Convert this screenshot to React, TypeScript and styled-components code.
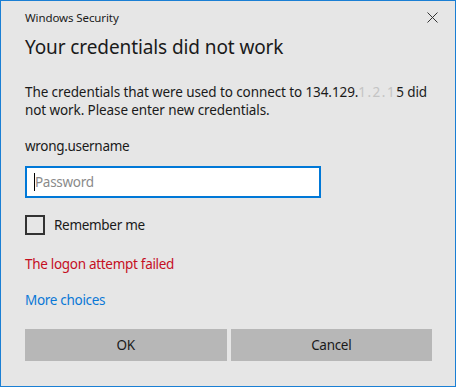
import React from "react";
import styled, { createGlobalStyle } from "styled-components";

const GlobalStyle = createGlobalStyle`
  html, body {
    margin: 0;
    padding: 0;
    background: #e6e6e6;
  }
  * {
    box-sizing: border-box;
  }
`;

const Window = styled.div`
  width: 456px;
  height: 387px;
  border: 1px solid #1a7fd4;
  background: #e6e6e6;
  font-family: "Noto Sans", "Open Sans", sans-serif;
  color: #1a1a1a;
  display: flex;
  flex-direction: column;
`;

const TitleBar = styled.div`
  height: 32px;
  display: flex;
  align-items: center;
  justify-content: space-between;
  padding: 0 13px 0 24px;
`;

const Caption = styled.span`
  font-size: 11.5px;
  letter-spacing: -0.1px;
  color: #1a1a1a;
`;

const CloseButton = styled.button`
  width: 20px;
  height: 20px;
  border: none;
  background: transparent;
  padding: 0;
  display: flex;
  align-items: center;
  justify-content: center;
`;

const Body = styled.div`
  padding: 0 23px 0 24px;
  display: flex;
  flex-direction: column;
  font-size: 13.5px;
  letter-spacing: -0.3px;
`;

const Heading = styled.h1`
  margin: 0;
  font-size: 19px;
  font-weight: 400;
  letter-spacing: -0.1px;
  line-height: 28px;
`;

const Message = styled.p`
  margin: 22px 0 0;
  line-height: 18px;
  letter-spacing: -0.1px;
`;

const Masked = styled.span`
  color: #c4c4c4;
  letter-spacing: 1.5px;
`;

const Username = styled.div`
  margin-top: 18px;
  line-height: 18px;
`;

const Field = styled.div`
  margin-top: 11px;
  width: 296px;
  height: 32px;
  border: 2px solid #0078d7;
  background: #fff;
  display: flex;
  align-items: center;
  padding-left: 7px;
`;

const Caret = styled.span`
  width: 1px;
  height: 18px;
  background: #000;
`;

const Placeholder = styled.span`
  color: #8a8a8a;
`;

const CheckRow = styled.label`
  margin-top: 17px;
  display: flex;
  align-items: center;
  gap: 9px;
`;

const Box = styled.span`
  width: 20px;
  height: 20px;
  border: 2px solid #333;
`;

const ErrorText = styled.div`
  margin-top: 20px;
  line-height: 18px;
  color: #c50f1f;
`;

const Link = styled.a`
  margin-top: 18px;
  line-height: 18px;
  color: #0a78d6;
`;

const Buttons = styled.div`
  margin-top: 20px;
  display: grid;
  grid-template-columns: 1fr 1fr;
  gap: 4px;
`;

const Button = styled.button`
  height: 32px;
  border: none;
  background: #b7b7b7;
  font-family: inherit;
  font-size: 13.5px;
  letter-spacing: -0.3px;
  color: #1a1a1a;
`;

export default function App() {
  return (
    <>
      <GlobalStyle />
      <Window>
        <TitleBar>
          <Caption>Windows Security</Caption>
          <CloseButton aria-label="Close">
            <svg width="11" height="11" viewBox="0 0 11 11">
              <path d="M0.5 0.5 L10.5 10.5 M10.5 0.5 L0.5 10.5" stroke="#333" strokeWidth="1" />
            </svg>
          </CloseButton>
        </TitleBar>
        <Body>
          <Heading>Your credentials did not work</Heading>
          <Message>
            The credentials that were used to connect to 134.129.<Masked>1.2.1</Masked>5 did not work. Please enter new credentials.
          </Message>
          <Username>wrong.username</Username>
          <Field>
            <Caret />
            <Placeholder>Password</Placeholder>
          </Field>
          <CheckRow>
            <Box />
            Remember me
          </CheckRow>
          <ErrorText>The logon attempt failed</ErrorText>
          <Link>More choices</Link>
          <Buttons>
            <Button>OK</Button>
            <Button>Cancel</Button>
          </Buttons>
        </Body>
      </Window>
    </>
  );
}
